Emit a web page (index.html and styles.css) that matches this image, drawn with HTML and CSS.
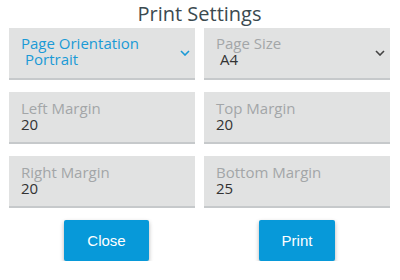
FILE: index.html
```html
<!DOCTYPE html>
<html>

<head>
	<title>Print Settings</title>
	<meta charset=utf-8>
	<meta name=viewport content="width=device-width, initial-scale=1">
	<link rel="stylesheet" href="styles.css">
</head>

<body>
	<div id="dialog">
		<div class="title">Print Settings</div>
		<div class="fields">
			<div class="field select active">
				<div class="label">Page Orientation</div>
				<div class="value">Portrait</div>
				<svg class="chev" width="10" height="6" viewBox="0 0 10 6"><path d="M1 1 L5 5 L9 1" fill="none" stroke="currentColor" stroke-width="1.6"/></svg>
			</div>
			<div class="field select">
				<div class="label">Page Size</div>
				<div class="value">A4</div>
				<svg class="chev" width="10" height="6" viewBox="0 0 10 6"><path d="M1 1 L5 5 L9 1" fill="none" stroke="currentColor" stroke-width="1.6"/></svg>
			</div>
			<div class="field">
				<div class="label">Left Margin</div>
				<div class="value">20</div>
			</div>
			<div class="field">
				<div class="label">Top Margin</div>
				<div class="value">20</div>
			</div>
			<div class="field">
				<div class="label">Right Margin</div>
				<div class="value">20</div>
			</div>
			<div class="field">
				<div class="label">Bottom Margin</div>
				<div class="value">25</div>
			</div>
		</div>
		<div class="buttons">
			<button class="btn close">Close</button>
			<button class="btn">Print</button>
		</div>
	</div>
</body>

</html>
```

FILE: styles.css
```css
body {
	margin: 0;
	background: white;
	font-family: 'Open Sans', 'Noto Sans', sans-serif;
}

#dialog {
	padding: 0 10px 0 9px;
}

.title {
	height: 28px;
	font-size: 20px;
	line-height: 28px;
	text-align: center;
	color: #3b4a50;
}

.fields {
	display: grid;
	grid-template-columns: 1fr 1fr;
	column-gap: 9px;
	row-gap: 12px;
}

.field {
	height: 50px;
	background: #e1e2e2;
	border-bottom: 2px solid #c6c9cb;
	padding: 0 12px;
	position: relative;
	font-size: 15px;
	line-height: 16px;
}

.field .label {
	padding-top: 8px;
	color: #a3a6a8;
}

.field .value {
	color: #333;
}

.select .label {
	padding-top: 7px;
}

.select .value {
	padding-left: 4px;
}

.active .label,
.active .value {
	color: #1a9ad6;
}

.chev {
	position: absolute;
	right: 5px;
	top: 22px;
	color: #444;
}

.active .chev {
	color: #1a9ad6;
}

.buttons {
	display: grid;
	grid-template-columns: 1fr 1fr;
	column-gap: 9px;
	padding-top: 12px;
	justify-items: center;
}

.btn {
	height: 41px;
	padding: 0 23px;
	border: 0;
	border-radius: 2px;
	background: #0799d9;
	color: white;
	font-family: 'Liberation Sans', Arial, sans-serif;
	font-size: 15px;
	box-shadow: 0 2px 4px rgba(0, 0, 0, 0.3);
}

.close {
	margin-left: 9px;
}
```
